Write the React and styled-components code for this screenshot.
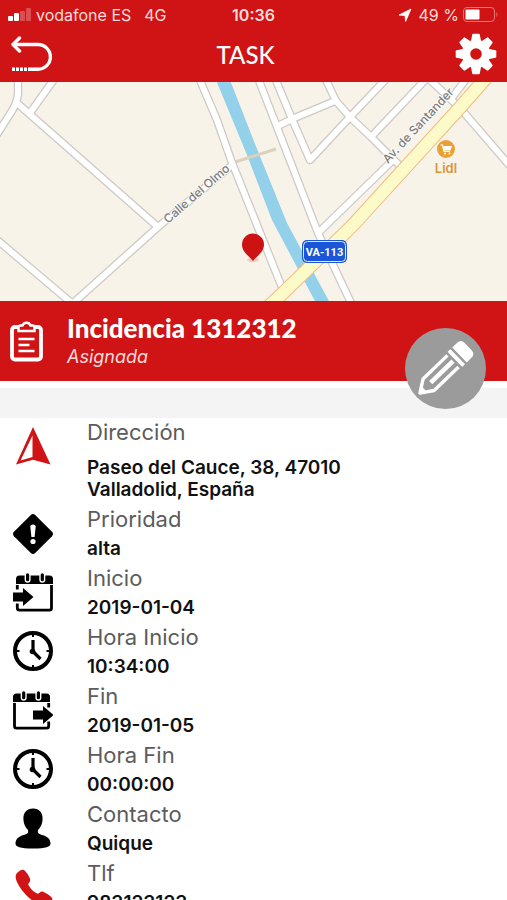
import React from 'react';
import styled, { createGlobalStyle } from 'styled-components';
import { IoCall } from 'react-icons/io5';

const GlobalStyle = createGlobalStyle`
    * {
        box-sizing: border-box;
    }

    body {
        margin: 0;
        background-color: white;
        font-family: Inter, 'Liberation Sans', sans-serif;
    }
`;

const Screen = styled.div`
    display: flex;
    flex-direction: column;
    height: 100vh;
    overflow: hidden;
`;

const TopBar = styled.header`
    flex: none;
    color: white;
    background-color: #d01314;
`;

const StatusBar = styled.div`
    display: grid;
    grid-template-columns: 1fr auto 1fr;
    align-items: center;
    height: 30px;
    padding: 0 8px;
    font-size: 16px;
    color: #fbdcdc;
`;

const StatusGroup = styled.div`
    display: flex;
    align-items: center;
    justify-content: ${(props) => (props.$end ? 'flex-end' : 'flex-start')};
    gap: ${(props) => (props.$end ? '4px' : '5px')};
    white-space: nowrap;
`;

const Network = styled.span`
    margin-left: 8px;
`;

const Clock = styled.span`
    font-weight: 600;
`;

const NavBar = styled.div`
    display: flex;
    align-items: center;
    justify-content: space-between;
    height: 52px;
    padding: 0 10px 4px;
`;

const NavButton = styled.button`
    display: flex;
    justify-content: ${(props) => (props.$end ? 'flex-end' : 'flex-start')};
    width: ${(props) => (props.$end ? '58px' : '42px')};
    padding: 0;
    border: none;
    color: white;
    background: none;
`;

const PageTitle = styled.h1`
    margin: 0;
    font-family: Lato, sans-serif;
    font-size: 24px;
    font-weight: 500;
`;

const MapView = styled.svg`
    display: block;
    flex: none;
    width: 100%;
    height: 219px;
    background-color: #f7f3e9;
`;

const Banner = styled.section`
    position: relative;
    flex: none;
    display: flex;
    align-items: center;
    gap: 24px;
    height: 80px;
    padding: 0 10px;
    color: white;
    background-color: #d01314;
`;

const BannerTitle = styled.h2`
    margin: 0;
    font-family: Lato, sans-serif;
    font-size: 26px;
    font-weight: 900;
    line-height: 32px;
`;

const BannerState = styled.p`
    margin: 0;
    font-size: 18px;
    font-style: italic;
    line-height: 26px;
    color: #fbdcdc;
`;

const EditButton = styled.button`
    position: absolute;
    top: 27px;
    right: 21px;
    width: 81px;
    height: 81px;
    padding: 0;
    border: none;
    border-radius: 50%;
    background-color: #9b9b9b;
`;

const Divider = styled.div`
    flex: none;
    height: 37px;
    border-top: 7px solid white;
    background-color: #f4f4f4;
`;

const Details = styled.ul`
    flex: 1;
    min-height: 0;
    margin: 0;
    padding: 0;
    overflow-y: auto;
    list-style: none;
    scrollbar-width: none;
`;

const DetailRow = styled.li`
    display: grid;
    grid-template-columns: 40px 1fr;
    column-gap: 34px;
    padding: 0 13px 4px;
`;

const IconCell = styled.div`
    padding-top: 8px;
    color: ${(props) => (props.$red ? '#d01314' : 'black')};

    svg {
        display: block;
    }
`;

const DetailLabel = styled.h3`
    margin: 0;
    font-size: 22px;
    font-weight: 400;
    line-height: 28px;
    color: #5c5c5c;
`;

const DetailValue = styled.p`
    max-width: 290px;
    margin: ${(props) => (props.$spaced ? '11px' : '5px')} 0 0;
    font-size: 19px;
    font-weight: 600;
    line-height: 22px;
    color: #111;
`;

const PhoneLink = styled.a`
    color: inherit;
    text-decoration: none;
`;

const SignalIcon = () => (
    <svg width="23" height="14" viewBox="0 0 23 14" fill="white">
        <rect x="0" y="8" width="5" height="5" rx="1" />
        <rect x="6" y="5" width="5" height="8" rx="1" />
        <rect x="12" y="3" width="5" height="10" rx="1" opacity="0.25" />
        <rect x="18" y="0" width="5" height="13" rx="1" opacity="0.25" />
    </svg>
);

const LocationIcon = () => (
    <svg width="18" height="14" viewBox="0 0 18 14" fill="white">
        <path d="M14 1 L2 7 L8 7.6 L8.600 13.500 Z" stroke="white" strokeWidth="0.800" />
    </svg>
);

const BatteryIcon = () => (
    <svg width="36" height="16" viewBox="0 0 36 16" fill="none">
        <rect x="0.5" y="0.5" width="31" height="14" rx="3.5" stroke="#e67a7a" />
        <rect x="2.5" y="2.5" width="14" height="10" rx="1" fill="white" />
        <path d="M33.5 5 Q35.5 7.5 33.5 10 Z" fill="#e67a7a" />
    </svg>
);

const BackIcon = () => (
    <svg width="42" height="36" viewBox="0 0 42 36" fill="none" stroke="white" strokeWidth="3.4">
        <path d="M9.500 2 L3 8.500 L9.500 15" strokeLinecap="round" strokeLinejoin="round" />
        <path d="M3 8.500 H28 A12.400 12.400 0 0 1 28 33.300 H19.5" />
        <path d="M2 33.300 H20" strokeDasharray="3 1" />
    </svg>
);

const GearIcon = () => (
    <svg width="42" height="42" viewBox="-21 -21 42 42" fill="white">
        {[0, 45, 90, 135, 180, 225, 270, 315].map((angle) => (
            <path
                key={angle}
                d="M-5.2 -12 L-3.8 -19.500 Q-3.6 -20.3 -2.800 -20.3 H2.800 Q3.6 -20.3 3.8 -19.500 L5.2 -12 Z"
                transform={`rotate(${angle})`}
            />
        ))}
        <circle r="10" fill="none" stroke="white" strokeWidth="8.400" />
    </svg>
);

const ClipboardIcon = () => (
    <svg width="33" height="41" viewBox="0 0 33 41" fill="none" stroke="white">
        <rect x="2" y="6" width="29" height="32.5" rx="3" strokeWidth="3.8" />
        <path
            d="M8.5 10 V6.5 Q8.5 4.5 10.5 4.5 H12.5 Q13.5 1.8 16.5 1.8 Q19.5 1.8 20.5 4.5 H22.5 Q24.5 4.5 24.5 6.5 V10 Z"
            fill="#d01314"
            strokeWidth="2.4"
        />
        <path d="M8.5 18 H24.5 M8.5 24 H19.5 M8.5 30 H24.5" strokeWidth="2.6" />
    </svg>
);

const PencilIcon = () => (
    <svg width="81" height="81" viewBox="0 0 81 81">
        <g transform="translate(13.500 66.500) rotate(-44)">
            <path
                d="M48 -8 H14 L2 0 L14 8 H48"
                fill="none"
                stroke="white"
                strokeWidth="3.400"
                strokeLinejoin="round"
            />
            <path d="M1 0 L8 -4.6 V4.6 Z" fill="white" />
            <path d="M17 0 H48" stroke="white" strokeWidth="4.600" />
            <rect x="50.500" y="-10.500" width="4" height="21" rx="0.500" fill="white" />
            <path
                d="M57 -10.400 H63.500 Q69 -10.400 69 -5 V5 Q69 10.400 63.500 10.400 H57 Z"
                fill="white"
            />
        </g>
    </svg>
);

const CompassIcon = () => (
    <svg width="40" height="40" viewBox="0 0 40 40">
        <path
            d="M20 1 L37.500 38.5 L20 33.800 L3 38.500 Z M19.500 9.500 L7.500 34.500 L19.500 31 Z"
            fill="currentColor"
            fillRule="evenodd"
        />
    </svg>
);

const PriorityIcon = () => (
    <svg width="40" height="42" viewBox="0 0 40 42">
        <path
            d="M17.800 2 Q20 0 22.200 2 L39 18.800 Q41 21 39 23.200 L22.200 40 Q20 42 17.800 40 L1 23.200 Q-1 21 1 18.800 Z"
            fill="currentColor"
        />
        <path d="M17.300 13.500 Q17.300 11.500 20 11.500 Q22.700 11.500 22.700 13.500 L21.600 24 H18.400 Z" fill="white" />
        <circle cx="20" cy="28.500" r="2.600" fill="white" />
    </svg>
);

const CalendarIcon = ({ out }) => (
    <svg width="40" height="41" viewBox="0 0 40 41">
        <g transform={out ? 'translate(40 0) scale(-1 1)' : undefined}>
            <path
                d="M4.800 13 V36 Q4.800 38.200 7 38.200 H37 Q39 38.200 39 36 V13"
                fill="none"
                stroke="black"
                strokeWidth="2.800"
                transform="translate(-0.500 0)"
            />
            <path d="M3 12 V7 Q3 3.500 6.500 3.500 H36.500 Q40 3.500 40 7 V12 Z" />
            <rect x="12.300" y="0.500" width="4.600" height="9.500" rx="2.300" stroke="white" strokeWidth="1.400" />
            <rect x="27" y="0.500" width="4.600" height="9.500" rx="2.300" stroke="white" strokeWidth="1.400" />
            {/* gap in the frame where the arrow goes through */}
            <rect x="0" y="17.500" width="6" height="14" fill="white" />
        </g>
        <path
            d="M0 20.500 H10 V16 L20.500 25 L10 34 V29.500 H0 Z"
            transform={out ? 'translate(20 0)' : undefined}
        />
    </svg>
);

const ClockIcon = () => (
    <svg width="40" height="40" viewBox="0 0 40 40" fill="none" stroke="black">
        <circle cx="20" cy="20" r="18" strokeWidth="4" />
        <path d="M20 3 V6 M20 34 V37 M3 20 H6.500 M33.500 20 H37" strokeWidth="2" />
        <path d="M20 9 V20.500 L27.500 28" strokeWidth="3.200" strokeLinejoin="round" />
        <circle cx="19.500" cy="20.500" r="2.800" fill="black" stroke="none" />
    </svg>
);

const PersonIcon = () => (
    <svg width="40" height="41" viewBox="0 0 40 41" fill="black">
        <path d="M20 0.500 C26.500 0.500 29.800 5 29.600 11 C29.500 16 27.500 19.500 25 22 C24.500 24.500 25 25.500 27 26.200 C33 27.800 37.500 30 37.500 35.500 C37.500 39 33 40.500 20 40.500 C7 40.500 2.500 39 2.500 35.500 C2.500 30 7 27.800 13 26.200 C15 25.500 15.500 24.500 15 22 C12.500 19.500 10.500 16 10.400 11 C10.200 5 13.500 0.500 20 0.500 Z" />
    </svg>
);

const streets = [
    'M18 -4 V12 Q17 22 10 32 L-4 54',
    'M17 21 L158 145',
    'M30 31 L55 -4',
    'M-4 157 L74 223',
    'M71 223 L158 145 L232 83',
    'M199 -4 L217 38 L231 78 L285 213',
    'M258 -4 L277 45 L318 151 L352 223',
    'M275 -4 L292 37 L310 78 L350 35 L387 -4',
    'M276 45 L292 37 L335 19',
    'M325 -4 L336 19 L350 35 L371 55 L400 84',
    'M371 55 L427 -4',
    'M428 -4 L460 26 L510 84',
    'M451 17 L467 -4',
    'M318 151 L392 79',
];

const avenue = 'M486 -4 L456 30 L353 143 L283 211 L268 225';

const StreetMap = () => (
    <MapView viewBox="0 0 507 219" preserveAspectRatio="xMidYMid slice" role="img" aria-label="Mapa">
        <path d="M216 -2 H230 L255 62 L287 141 L330 221 H316 L272 138 L247 73 Z" fill="#93d0ea" />
        <path d="M235 80 L276 67" stroke="#d9d2bd" strokeWidth="3" />
        <g fill="none" stroke="#cdcac5" strokeWidth="8.500" strokeLinejoin="round">
            {streets.map((d) => (
                <path key={d} d={d} />
            ))}
        </g>
        <g fill="none" stroke="white" strokeWidth="6" strokeLinejoin="round">
            {streets.map((d) => (
                <path key={d} d={d} />
            ))}
        </g>
        <path d={avenue} fill="none" stroke="#f2bd80" strokeWidth="14" />
        <path d={avenue} fill="none" stroke="#fdfac9" strokeWidth="12" />
        <g
            fontFamily="Inter, sans-serif"
            fontSize="12"
            fontWeight="500"
            fill="#7c7c80"
            stroke="#fbfaf5"
            strokeWidth="2"
            paintOrder="stroke"
        >
            <text transform="translate(168 142) rotate(-41)">Calle del Olmo</text>
            <text transform="translate(388 82) rotate(-47)">Av. de Santander</text>
        </g>
        <circle cx="446" cy="67" r="9" fill="#e9a136" />
        <path d="M440.500 63 H442.500 L444 69.500 H450" fill="none" stroke="white" strokeWidth="1.200" />
        <path d="M443 64 H452 L450.500 68.500 H444 Z" fill="white" />
        <circle cx="445" cy="71.500" r="1" fill="white" />
        <circle cx="449.500" cy="71.500" r="1" fill="white" />
        <text
            x="446"
            y="91"
            fontFamily="Inter, sans-serif"
            fontSize="13"
            fontWeight="600"
            fill="#dc9636"
            textAnchor="middle"
        >
            Lidl
        </text>
        <rect x="302" y="158" width="45" height="23" rx="5" fill="#1b56d8" />
        <rect x="303.500" y="159.500" width="42" height="20" rx="4" fill="#1b56d8" stroke="#dfe8ff" />
        <text
            x="324.500"
            y="174"
            fontFamily="Roboto, sans-serif"
            fontSize="11"
            fontWeight="700"
            fill="white"
            textAnchor="middle"
        >
            VA-113
        </text>
        <ellipse cx="253" cy="178" rx="6" ry="2" fill="#f3c9c0" />
        <path
            d="M253 179 C249 174 242 170 242 162.500 A11 11 0 0 1 264 162.500 C264 170 257 174 253 179 Z"
            fill="#cc1213"
        />
    </MapView>
);

const details = [
    { label: 'Dirección', value: 'Paseo del Cauce, 38, 47010 Valladolid, España', icon: <CompassIcon />, red: true, spaced: true },
    { label: 'Prioridad', value: 'alta', icon: <PriorityIcon /> },
    { label: 'Inicio', value: '2019-01-04', icon: <CalendarIcon /> },
    { label: 'Hora Inicio', value: '10:34:00', icon: <ClockIcon /> },
    { label: 'Fin', value: '2019-01-05', icon: <CalendarIcon out /> },
    { label: 'Hora Fin', value: '00:00:00', icon: <ClockIcon /> },
    { label: 'Contacto', value: 'Quique', icon: <PersonIcon /> },
    {
        label: 'Tlf',
        value: <PhoneLink href="tel:983123123">983123123</PhoneLink>,
        icon: <IoCall size={42} />,
        red: true,
    },
];

const App = () => {
    return (
        <Screen>
            <GlobalStyle />
            <TopBar>
                <StatusBar>
                    <StatusGroup>
                        <SignalIcon />
                        <span>vodafone ES</span>
                        <Network>4G</Network>
                    </StatusGroup>
                    <Clock>10:36</Clock>
                    <StatusGroup $end>
                        <LocationIcon />
                        <span>49 %</span>
                        <BatteryIcon />
                    </StatusGroup>
                </StatusBar>
                <NavBar>
                    <NavButton aria-label="Volver">
                        <BackIcon />
                    </NavButton>
                    <PageTitle>TASK</PageTitle>
                    <NavButton $end aria-label="Ajustes">
                        <GearIcon />
                    </NavButton>
                </NavBar>
            </TopBar>
            <StreetMap />
            <Banner>
                <ClipboardIcon />
                <div>
                    <BannerTitle>Incidencia 1312312</BannerTitle>
                    <BannerState>Asignada</BannerState>
                </div>
                <EditButton aria-label="Editar">
                    <PencilIcon />
                </EditButton>
            </Banner>
            <Divider />
            <Details>
                {details.map(({ label, value, icon, red, spaced }) => (
                    <DetailRow key={label}>
                        <IconCell $red={red}>{icon}</IconCell>
                        <div>
                            <DetailLabel>{label}</DetailLabel>
                            <DetailValue $spaced={spaced}>{value}</DetailValue>
                        </div>
                    </DetailRow>
                ))}
            </Details>
        </Screen>
    );
};

export default App;
